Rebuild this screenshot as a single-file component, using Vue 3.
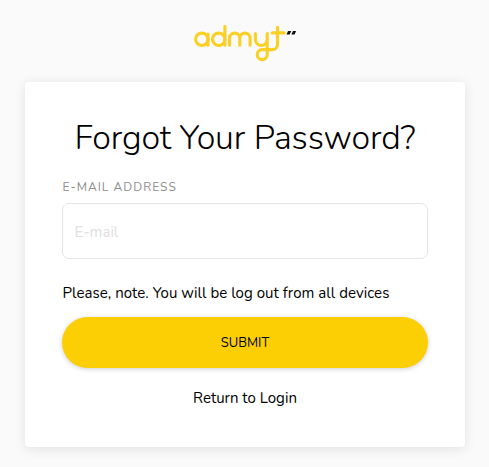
<script setup>
import { ref } from 'vue'

const email = ref('')
</script>

<template>
  <main class="page">
    <svg class="logo" viewBox="0 0 104 38" role="img" aria-label="admyt">
      <g fill="none" stroke="#fbd024" stroke-width="3.1" stroke-linecap="round" stroke-linejoin="round">
        <circle cx="8.8" cy="15.3" r="6.2" />
        <path d="M15 10V21.3" />
        <circle cx="25.7" cy="15.3" r="6.2" />
        <path d="M31.9 2.6V21.3" />
        <path d="M36.5 21.3V14.3a5.15 5.15 0 0 1 10.3 0V21.3M46.8 14.3a5.15 5.15 0 0 1 10.3 0V21.3" />
        <path d="M62.4 9.5V15.6a5.9 5.9 0 0 0 11.8 0V9.5V30.6a5 5 0 1 1-5-5H79.3a5.2 5.2 0 0 0 5.2-5.2V3.2" />
        <path d="M79.3 8.9H91.2" />
      </g>
      <path d="M95 7h3.2l-1.5 3.4h-3.2zM99.9 7h3.2l-1.5 3.4h-3.2z" fill="#111" />
    </svg>
    <form class="card" @submit.prevent>
      <h1>Forgot Your Password?</h1>
      <label for="email">E-MAIL ADDRESS</label>
      <input id="email" v-model="email" type="email" placeholder="E-mail" />
      <p>Please, note. You will be log out from all devices</p>
      <button type="submit">SUBMIT</button>
      <a href="#">Return to Login</a>
    </form>
  </main>
</template>

<style>
body {
  background: #fafafa;
}
</style>

<style scoped>
.page {
  box-sizing: border-box;
  height: 467px;
  padding: 24px 24px 0 25px;
  display: flex;
  flex-direction: column;
  align-items: center;
  overflow: hidden;
  font-family: Nunito, "Open Sans", sans-serif;
  color: #000;
}
.logo {
  width: 104px;
  height: 38px;
  flex: none;
}
.card {
  box-sizing: border-box;
  width: 440px;
  height: 365px;
  margin-top: 20px;
  padding: 33px 37px 0;
  display: flex;
  flex-direction: column;
  background: #fff;
  border-radius: 4px;
  box-shadow: 0 2px 12px rgba(0, 0, 0, 0.1);
}
h1 {
  margin: 0;
  font-size: 34px;
  line-height: 46px;
  font-weight: 300;
  letter-spacing: -0.13px;
  text-align: center;
  white-space: nowrap;
}
label {
  margin-top: 17px;
  padding-left: 0.5px;
  font-size: 12px;
  line-height: 18px;
  letter-spacing: 1.03px;
  color: #8e8e8e;
}
input {
  box-sizing: border-box;
  height: 56px;
  margin: 7px 0 0;
  padding: 2px 11px 0 11.5px;
  border: 1px solid #e5e5e5;
  border-radius: 7px;
  outline: none;
  background: #fff;
  font: inherit;
  font-size: 15px;
}
input::placeholder {
  color: #e0e0e0;
  opacity: 1;
}
p {
  margin: 24px 0 0;
  padding-left: 0.5px;
  font-size: 15px;
  line-height: 20px;
  letter-spacing: 0.05px;
  white-space: nowrap;
}
button {
  height: 51px;
  margin: 14px 0 0;
  padding: 0;
  border: 0;
  border-radius: 26px;
  background: #fccf05;
  box-shadow: 0 1px 5px rgba(0, 0, 0, 0.2);
  font: inherit;
  font-size: 13px;
  color: #000;
}
a {
  margin-top: 20px;
  align-self: center;
  font-size: 15px;
  line-height: 20px;
  color: #000;
  text-decoration: none;
}
</style>
